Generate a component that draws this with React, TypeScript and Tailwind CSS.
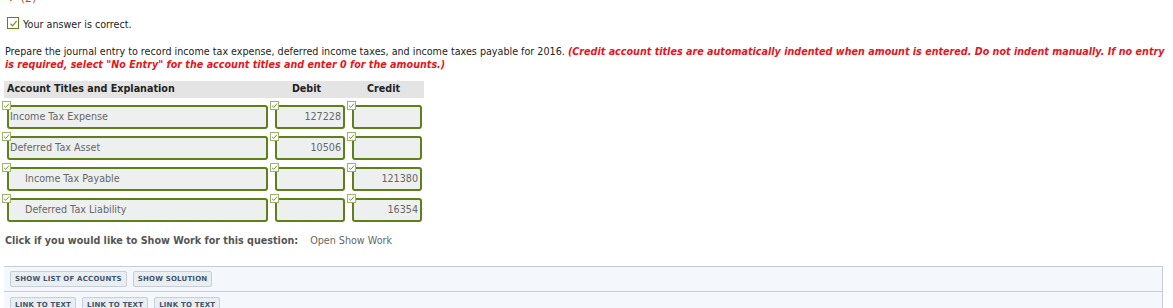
import React from 'react';

interface Entry {
    title: string;
    debit: string;
    credit: string;
    indent: boolean;
}

const entries: Entry[] = [
    { title: 'Income Tax Expense', debit: '127228', credit: '', indent: false },
    { title: 'Deferred Tax Asset', debit: '10506', credit: '', indent: false },
    { title: 'Income Tax Payable', debit: '', credit: '121380', indent: true },
    { title: 'Deferred Tax Liability', debit: '', credit: '16354', indent: true },
];

const font = { fontFamily: '"DejaVu Sans", Verdana, sans-serif' };

const MiniCheck: React.FC = () => (
    <div className="absolute top-0 left-0 w-[9px] h-[9px] bg-white border border-[#9bb36a] flex items-center justify-center">
        <svg width="7" height="7" viewBox="0 0 7 7">
            <path d="M1 3.8 L2.8 5.4 L6 1.6" fill="none" stroke="#6f9a2a" strokeWidth="1" />
        </svg>
    </div>
);

const Cell: React.FC<{ width: string; value: string; align: 'left' | 'right'; indent?: boolean }> = ({ width, value, align, indent }) => (
    <div className={`relative pt-[4px] pl-[5px] ${width}`}>
        <MiniCheck />
        <div
            className={`h-[24px] rounded-[3px] border-2 border-[#5f7f1a] bg-[#eef0f0] text-[#666] flex items-center text-[9.6px] ${
                align === 'right' ? 'justify-end pr-[2px]' : indent ? 'pl-[16px]' : 'pl-[1px]'
            }`}
        >
            {value}
        </div>
    </div>
);

const PanelButton: React.FC<{ label: string }> = ({ label }) => (
    <button className="h-[16px] px-[4px] rounded-[2px] border border-[#c6ced8] bg-[#e9eef3] text-[#44546a] text-[7px] font-bold tracking-[0.2px] leading-none">
        {label}
    </button>
);

export default function App() {
    return (
        <div className="w-[1173px] h-[308px] overflow-hidden bg-white text-[#222]" style={font}>
            {/* cut-off previous part label */}
            <div className="h-[4px] overflow-hidden pl-[8px]">
                <div className="-mt-[9px] text-[11px] text-[#b0542a]">✓ (2)</div>
            </div>

            <div className="flex items-center gap-[4px] pl-[7px] mt-[13px] h-[12px]">
                <div className="w-[12px] h-[12px] border border-[#5f7f1a] bg-white flex items-center justify-center">
                    <svg width="9" height="9" viewBox="0 0 9 9">
                        <path d="M1.5 4.8 L3.6 6.8 L7.6 2" fill="none" stroke="#6f9a2a" strokeWidth="1.2" />
                    </svg>
                </div>
                <span className="text-[9.6px] leading-none mt-[3px]">Your answer is correct.</span>
            </div>

            <p className="mt-[16px] pl-[5px] pr-[4px] text-[9.6px] leading-[13px] whitespace-nowrap">
                Prepare the journal entry to record income tax expense, deferred income taxes, and income taxes payable for 2016.{' '}
                <span className="text-[#e8141c] font-bold italic">
                    (Credit account titles are automatically indented when amount is entered. Do not indent manually. If no entry
                    <br />
                    is required, select "No Entry" for the account titles and enter 0 for the amounts.)
                </span>
            </p>

            <div className="mt-[10px] ml-[2px] w-[422px]">
                <div className="ml-[2px] h-[17px] bg-[#e4e4e4] flex items-center text-[9.6px] font-bold text-[#222]">
                    <div className="w-[264px] pl-[3px]">Account Titles and Explanation</div>
                    <div className="w-[77px] text-center">Debit</div>
                    <div className="w-[77px] text-center">Credit</div>
                </div>
                <div className="mt-[3px] flex flex-col gap-[3px]">
                    {entries.map((e) => (
                        <div key={e.title} className="flex gap-[2px]">
                            <Cell width="w-[266px]" value={e.title} align="left" indent={e.indent} />
                            <Cell width="w-[75px]" value={e.debit} align="right" />
                            <Cell width="w-[75px]" value={e.credit} align="right" />
                        </div>
                    ))}
                </div>
            </div>

            <div className="mt-[12px] pl-[5px] flex items-center text-[9.6px]">
                <span className="font-bold text-[#555]">Click if you would like to Show Work for this question:</span>
                <span className="ml-[12px] text-[#666]">Open Show Work</span>
            </div>

            <div className="mt-[18px] ml-[4px] w-[1159px] border-t border-r border-[#c5ccd4] bg-[#f4f7fb]">
                <div className="h-[25px] pl-[6px] flex items-center gap-[6px] border-b border-[#c5ccd4]">
                    <PanelButton label="SHOW LIST OF ACCOUNTS" />
                    <PanelButton label="SHOW SOLUTION" />
                </div>
                <div className="h-[25px] pl-[6px] pt-[5px] flex items-start gap-[6px]">
                    <PanelButton label="LINK TO TEXT" />
                    <PanelButton label="LINK TO TEXT" />
                    <PanelButton label="LINK TO TEXT" />
                </div>
            </div>
        </div>
    );
}
